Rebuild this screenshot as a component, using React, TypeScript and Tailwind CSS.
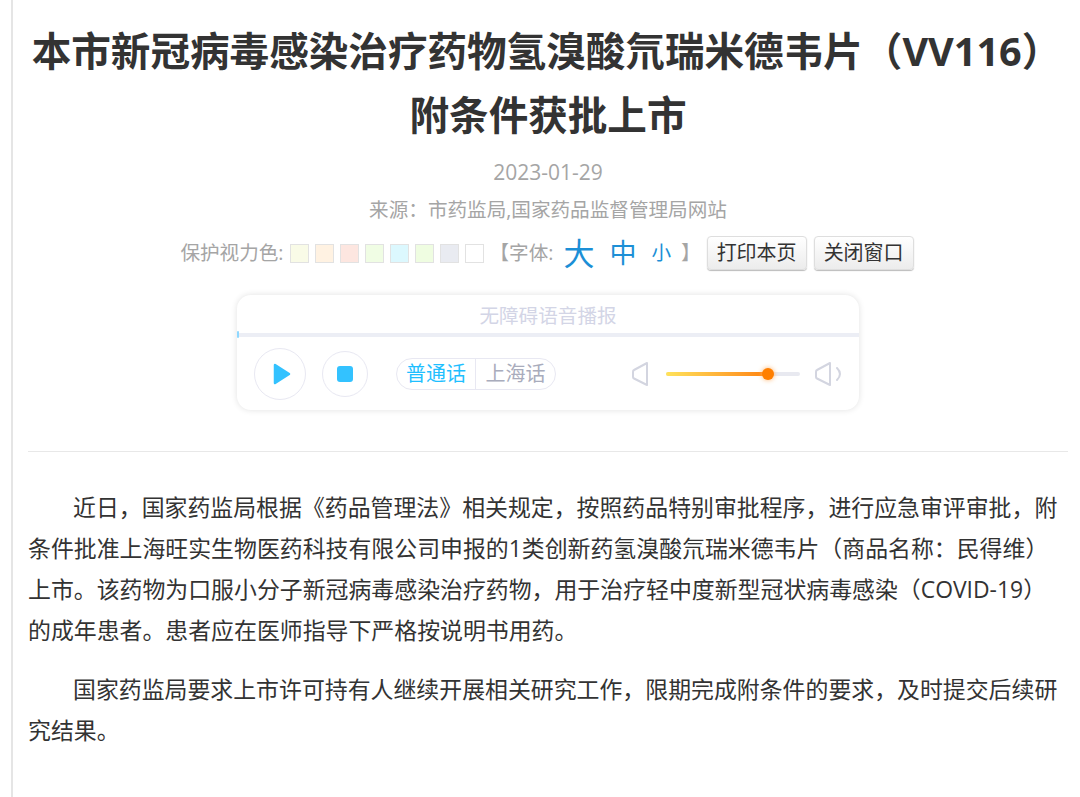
const swatches = [
  "bg-[#f9fbe7]",
  "bg-[#fff2e2]",
  "bg-[#fde6e0]",
  "bg-[#f0fde4]",
  "bg-[#dcf8fe]",
  "bg-[#effde1]",
  "bg-[#e9ebf1]",
  "bg-white",
];

function PrintButton({ children }: { children: string }) {
  return (
    <button className="h-[34px] w-[100px] rounded-[4px] border border-[#dedede] bg-gradient-to-b from-white to-[#ececec] text-[20px] leading-[30px] text-[#333] shadow-[0_1px_1px_#bbb]">
      {children}
    </button>
  );
}

function ToolBar() {
  return (
    <div className="mt-[7px] flex h-[36px] items-center justify-center pr-[2px] text-[19.6px] text-[#a5a5a5]">
      <span>保护视力色:</span>
      <div className="ml-[6px] flex gap-[6px]">
        {swatches.map((c) => (
          <span key={c} className={`h-[19px] w-[19px] border border-[#e2e2e2] ${c}`} />
        ))}
      </div>
      <span className="ml-[6px]">【字体:</span>
      <span className="ml-[10px] text-[31px] leading-[36px] text-[#1c8fd6]">大</span>
      <span className="ml-[15px] text-[27px] leading-[36px] text-[#1c8fd6]">中</span>
      <span className="ml-[15px] text-[19.6px] text-[#1c8fd6]">小</span>
      <span className="mr-[6px] ml-[10px]">】</span>
      <div className="flex gap-[7px]">
        <PrintButton>打印本页</PrintButton>
        <PrintButton>关闭窗口</PrintButton>
      </div>
    </div>
  );
}

function Speaker({ wave }: { wave?: boolean }) {
  return (
    <svg width={wave ? 28 : 17} height="26" viewBox={wave ? "0 0 28 26" : "0 0 17 26"} fill="none" stroke="#d3d5e0" strokeWidth="2" strokeLinejoin="round" strokeLinecap="round">
      <path d="M15 2 L2 9 Q1 9.5 1 11 V16 Q1 17 2 17.5 L15 24 Z" />
      {wave && <path d="M22 7 Q28 13 22 19" />}
    </svg>
  );
}

function VoicePlayer() {
  return (
    <div className="mx-auto mt-[24px] h-[115px] w-[622px] rounded-[14px] bg-white shadow-[0_0_6px_rgba(0,0,0,0.12)]">
      <div className="h-[38px] text-center text-[19.6px] leading-[41px] text-[#d3d5e6]">无障碍语音播报</div>
      <div className="relative h-[4px] bg-[#eceef5]">
        <span className="absolute top-[-2px] left-0 h-[7px] w-[2px] rounded bg-[#8fd8ff]" />
      </div>
      <div className="flex h-[73px] items-center pl-[17px]">
        <div className="flex h-[52px] w-[52px] items-center justify-center rounded-full border border-[#e8e8f2]">
          <svg width="18" height="22" viewBox="0 0 18 22" className="ml-[3px]">
            <path d="M2 2 L16 11 L2 20 Z" fill="#33c2ff" stroke="#33c2ff" strokeWidth="2.5" strokeLinejoin="round" />
          </svg>
        </div>
        <div className="ml-[16px] flex h-[46px] w-[46px] items-center justify-center rounded-full border border-[#e8e8f2]">
          <span className="h-[16px] w-[16px] rounded-[3px] bg-[#33c2ff]" />
        </div>
        <div className="ml-[28px] flex h-[32px] w-[160px] items-center rounded-full border border-[#e8e8f2] text-[20px]">
          <span className="w-[79px] border-r border-[#e8e8f2] text-center leading-[30px] text-[#1fbfff]">普通话</span>
          <span className="flex-1 text-center leading-[30px] text-[#a9acbc]">上海话</span>
        </div>
        <div className="ml-[76px]">
          <Speaker />
        </div>
        <div className="relative ml-[17px] h-[4px] w-[134px] rounded-full bg-[#e8e9f0]">
          <div className="h-full w-[102px] rounded-full bg-gradient-to-r from-[#ffe25a] to-[#ff8208]" />
          <span className="absolute top-[-4px] left-[96px] h-[12px] w-[12px] rounded-full bg-[#ff7f00] shadow-[0_0_5px_#ffb066]" />
        </div>
        <div className="ml-[15px]">
          <Speaker wave />
        </div>
      </div>
    </div>
  );
}

export default function App() {
  return (
    <div className="h-[797px] overflow-hidden bg-white pl-[11px] font-['Open_Sans','Noto_Sans_CJK_SC',sans-serif]">
      <div className="h-full border-l-2 border-[#e5e5e5] pr-[12px] pl-[15px]">
        <div className="h-[452px] border-b border-[#e8e8e8] text-center">
          <h1 className="pt-[19px] text-[39.6px] leading-[64px] font-bold whitespace-nowrap text-[#333]">
            <span className="pr-[3px]">本市新冠病毒感染治疗药物氢溴酸氘瑞米德韦片（VV116）</span>
            <br />
            附条件获批上市
          </h1>
          <div className="mt-[6px] text-[21px] leading-[38px] text-[#a5a5a5]">2023-01-29</div>
          <div className="text-[19.6px] leading-[37px] text-[#a5a5a5]">来源：市药监局,国家药品监督管理局网站</div>
          <ToolBar />
          <VoicePlayer />
        </div>
        <div className="pt-[35px] text-[22.9px] leading-[41px] text-[#333]">
          <p className="indent-[45px]">
            近日，国家药监局根据《药品管理法》相关规定，按照药品特别审批程序，进行应急审评审批，附条件批准上海旺实生物医药科技有限公司申报的1类创新药氢溴酸氘瑞米德韦片（商品名称：民得维）上市。该药物为口服小分子新冠病毒感染治疗药物，用于治疗轻中度新型冠状病毒感染（COVID-19）的成年患者。患者应在医师指导下严格按说明书用药。
          </p>
          <p className="mt-[18px] indent-[45px]">
            国家药监局要求上市许可持有人继续开展相关研究工作，限期完成附条件的要求，及时提交后续研究结果。
          </p>
        </div>
      </div>
    </div>
  );
}
